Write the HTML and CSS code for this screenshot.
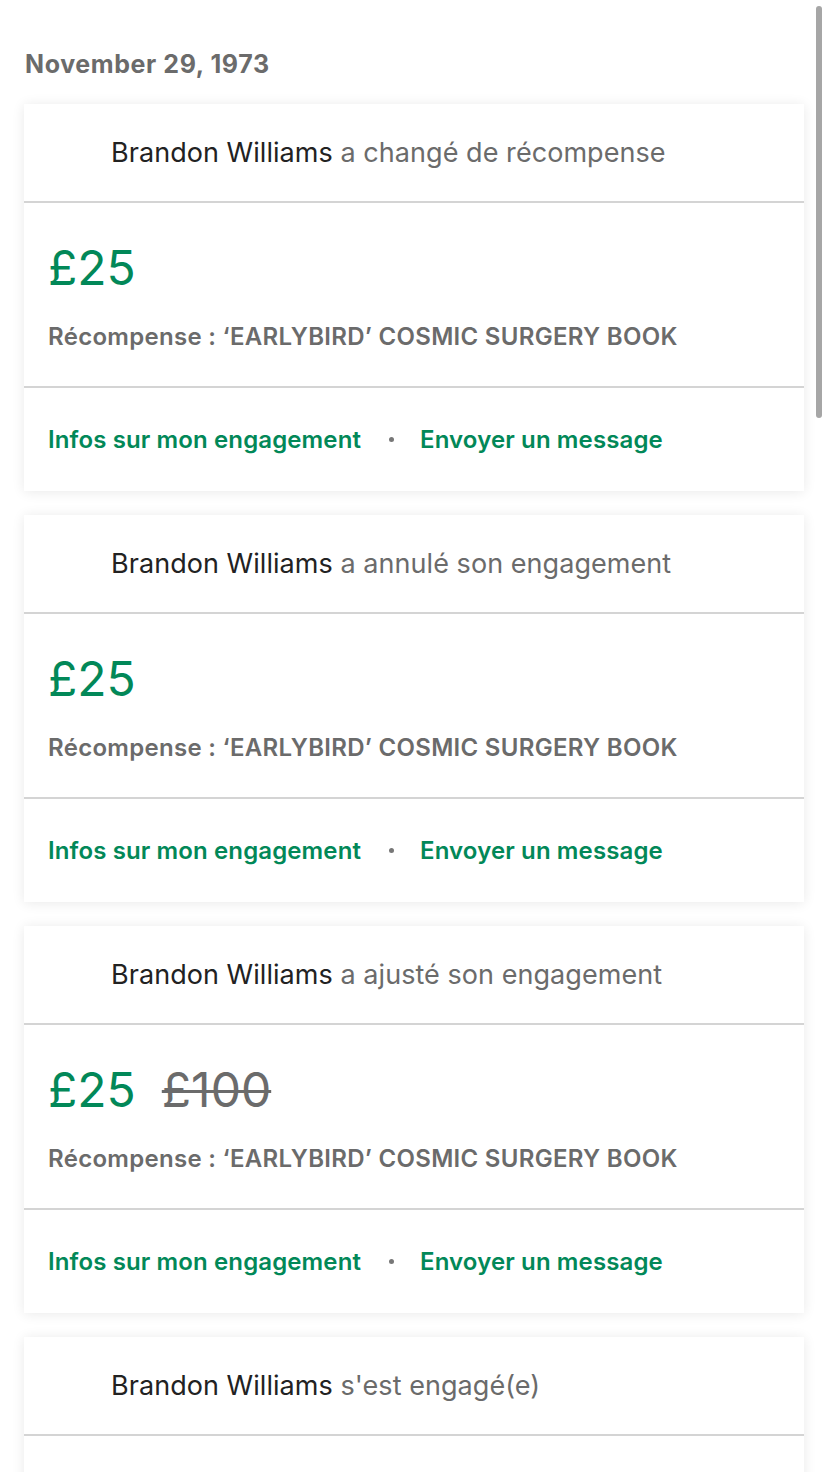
FILE: index.html
```html
<!DOCTYPE html>
<html lang="fr">
<head>
<meta charset="utf-8">
<title>Activité</title>
<link rel="stylesheet" href="styles.css">
</head>
<body>
<div class="scrollbar"><div class="thumb"></div></div>
<main class="page">
  <h2 class="date">November 29, 1973</h2>

  <section class="card">
    <header class="card-head"><span class="name">Brandon Williams</span>&nbsp;<span class="action">a changé de récompense</span></header>
    <div class="card-body">
      <div class="price"><span class="amount">£25</span></div>
      <div class="reward">Récompense : ‘EARLYBIRD’ COSMIC SURGERY BOOK</div>
    </div>
    <footer class="card-foot">
      <a class="link">Infos sur mon engagement</a>
      <span class="dot"></span>
      <a class="link">Envoyer un message</a>
    </footer>
  </section>

  <section class="card">
    <header class="card-head"><span class="name">Brandon Williams</span>&nbsp;<span class="action">a annulé son engagement</span></header>
    <div class="card-body">
      <div class="price"><span class="amount">£25</span></div>
      <div class="reward">Récompense : ‘EARLYBIRD’ COSMIC SURGERY BOOK</div>
    </div>
    <footer class="card-foot">
      <a class="link">Infos sur mon engagement</a>
      <span class="dot"></span>
      <a class="link">Envoyer un message</a>
    </footer>
  </section>

  <section class="card">
    <header class="card-head"><span class="name">Brandon Williams</span>&nbsp;<span class="action">a ajusté son engagement</span></header>
    <div class="card-body">
      <div class="price"><span class="amount">£25</span><span class="old">£100</span></div>
      <div class="reward">Récompense : ‘EARLYBIRD’ COSMIC SURGERY BOOK</div>
    </div>
    <footer class="card-foot">
      <a class="link">Infos sur mon engagement</a>
      <span class="dot"></span>
      <a class="link">Envoyer un message</a>
    </footer>
  </section>

  <section class="card">
    <header class="card-head"><span class="name">Brandon Williams</span>&nbsp;<span class="action">s'est engagé(e)</span></header>
    <div class="card-body">
      <div class="price"><span class="amount">£25</span></div>
      <div class="reward">Récompense : ‘EARLYBIRD’ COSMIC SURGERY BOOK</div>
    </div>
    <footer class="card-foot">
      <a class="link">Infos sur mon engagement</a>
      <span class="dot"></span>
      <a class="link">Envoyer un message</a>
    </footer>
  </section>
</main>
</body>
</html>
```

FILE: styles.css
```css
html, body {
  margin: 0;
  padding: 0;
  background: #ffffff;
  overflow: hidden;
  height: 100%;
}
body {
  font-family: Inter, "Noto Sans", "Liberation Sans", sans-serif;
  color: #222222;
}
.page {
  padding: 40px 24px 40px 24px;
  display: flex;
  flex-direction: column;
  gap: 24px;
}
.date {
  margin: 0 0 -8px 1px;
  font-size: 25px;
  line-height: 48px;
  font-weight: 700;
  letter-spacing: 0.6px;
  color: #6b6b6b;
}
.card {
  background: #fff;
  box-shadow: 0 1px 12px rgba(0, 0, 0, 0.09);
}
.card-head {
  height: 97px;
  display: flex;
  align-items: center;
  padding-left: 87px;
  font-size: 27px;
  letter-spacing: 0.05px;
  border-bottom: 2px solid #d4d4d4;
}
.name { color: #222222; }
.action { color: #6b6b6b; }
.card-body {
  padding: 36px 24px 35px;
  border-bottom: 2px solid #d4d4d4;
}
.price {
  display: flex;
  gap: 26px;
  font-size: 48px;
  line-height: 58px;
}
.amount { color: #028858; }
.old {
  color: #6b6b6b;
  text-decoration: line-through;
  text-decoration-thickness: 3px;
}
.reward {
  margin-top: 26px;
  font-size: 24px;
  line-height: 28px;
  font-weight: 600;
  color: #6b6b6b;
  letter-spacing: 0.3px;
}
.card-foot {
  height: 103px;
  display: flex;
  align-items: center;
  padding-left: 24px;
}
.link {
  color: #028858;
  font-size: 24px;
  font-weight: 600;
  letter-spacing: 0.12px;
  text-decoration: none;
}
.dot {
  width: 5px;
  height: 5px;
  border-radius: 50%;
  background: #777777;
  margin: 0 26px 0 28px;
}
.scrollbar {
  position: fixed;
  top: 6px;
  right: 6px;
  width: 6px;
  height: 412px;
  z-index: 10;
}
.thumb {
  width: 100%;
  height: 100%;
  border-radius: 3px;
  background: #a6a6a6;
}
```
